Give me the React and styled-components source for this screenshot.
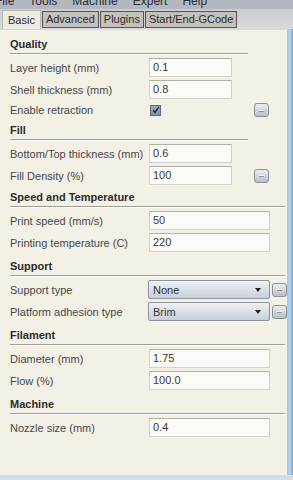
import React from 'react';
import styled, { createGlobalStyle } from 'styled-components';

const GlobalStyle = createGlobalStyle`
	html, body {
		margin: 0;
		padding: 0;
	}
	body {
		width: 293px;
		height: 480px;
		overflow: hidden;
		background: #d4dde6;
		font-family: "Liberation Sans", Arial, sans-serif;
	}
`;

const Frame = styled.div`
	width: 293px;
	height: 480px;
	display: flex;
	flex-direction: column;
	background: #d4dde6;
`;

const MenuBar = styled.div`
	height: 9px;
	overflow: hidden;
	background: #b3b8c0;
	display: flex;
	gap: 15px;
	margin-left: -5px;
	font-size: 12px;
	color: #2a2d33;
	line-height: 12px;
	span {
		display: block;
		margin-top: -5px;
	}
`;

const TabStrip = styled.div`
	height: 20px;
	display: flex;
	align-items: flex-end;
	gap: 1px;
	padding-left: 2px;
	background: linear-gradient(#c9ccd1, #d9dadb);
`;

const Tab = styled.div`
	box-sizing: border-box;
	height: ${({ $active }) => ($active ? '20px' : '17px')};
	margin-bottom: ${({ $active }) => ($active ? '-1px' : '1px')};
	padding: 0 ${({ $active }) => ($active ? '5px' : '3px')};
	font-size: 11px;
	line-height: 15px;
	color: #2c2c2c;
	background: ${({ $active }) => ($active ? '#eeebe3' : '#c3c1bb')};
	border: 1px solid ${({ $active }) => ($active ? '#b9b8b2' : '#55565a')};
	border-bottom: ${({ $active }) => ($active ? 'none' : '1px solid #55565a')};
	padding-top: ${({ $active }) => ($active ? '2px' : '0')};
`;

const Body = styled.div`
	display: flex;
	height: 446px;
`;

const Panel = styled.div`
	flex: 1;
	box-sizing: border-box;
	background: #f3f0e6;
	border-top: 1px solid #dcd9d1;
	border-right: 2px solid #a9cbe4;
	padding: 2px 0 0 10px;
	display: flex;
	flex-direction: column;
`;

const BlueEdge = styled.div`
	width: 5px;
	background: linear-gradient(90deg, #cfe2f0, #6fa6d2);
`;

const Section = styled.div`
	display: flex;
	flex-direction: column;
`;

const Header = styled.div`
	width: ${({ $w }) => $w}px;
	height: ${({ $h }) => $h || 22}px;
	box-sizing: border-box;
	border-bottom: 1px solid #9f9d96;
	box-shadow: 0 1px 0 #ffffff;
	font-size: 11px;
	font-weight: bold;
	color: #2b2b2b;
	line-height: 13px;
	padding-top: ${({ $h }) => ($h || 22) - 16}px;
`;

const Rows = styled.div`
	display: flex;
	flex-direction: column;
	gap: 3px;
	padding-top: 4px;
`;

const Row = styled.div`
	display: grid;
	grid-template-columns: 136px auto auto;
	align-items: center;
	column-gap: ${({ $gap }) => $gap}px;
	height: ${({ $h }) => $h || 19}px;
`;

const Label = styled.div`
	font-size: 11px;
	color: #46464a;
	white-space: nowrap;
`;

const Field = styled.div`
	width: ${({ $w }) => $w}px;
	height: 19px;
	box-sizing: border-box;
	border: 1px solid #d4d2cb;
	border-top-color: #b1afa8;
	background: #fbfaf6;
	font-size: 11px;
	line-height: 17px;
	color: #3a3a3a;
	padding-left: 3px;
`;

const CheckCell = styled.div`
	width: 83px;
`;

const Check = styled.div`
	width: 11px;
	height: 11px;
	margin-left: 1px;
	box-sizing: border-box;
	border: 1px solid #5f6b7d;
	background: linear-gradient(#9eabbe, #7f8ea6);
	display: flex;
	align-items: center;
	justify-content: center;
`;

const DotsButton = styled.div`
	width: 15px;
	height: 14px;
	box-sizing: border-box;
	border: 1px solid #8c9097;
	border-radius: 3px;
	background: linear-gradient(#eceef1, #b9bec6);
	display: flex;
	align-items: center;
	justify-content: center;
	&::after {
		content: '';
		width: 5px;
		height: 1px;
		background: #f6f7f9;
		box-shadow: 0 1px 0 #8e939b;
	}
`;

const Select = styled.div`
	width: 122px;
	height: 19px;
	box-sizing: border-box;
	border: 1px solid #8d939c;
	border-radius: 2px;
	background: linear-gradient(#eef1f5, #c8cfd9);
	display: flex;
	align-items: center;
	justify-content: space-between;
	padding: 0 8px 0 4px;
	font-size: 11px;
	color: #333;
	&::after {
		content: '';
		border-left: 3px solid transparent;
		border-right: 3px solid transparent;
		border-top: 4px solid #222;
	}
`;

const Spacer = styled.div``;

const Checkmark = () => (
	<svg width="8" height="8" viewBox="0 0 8 8">
		<path d="M1.2 4.2 L3 6.4 L6.8 1.2" fill="none" stroke="#1d2330" strokeWidth="1.4" />
	</svg>
);

const FieldRow = ({ label, value, w }) => (
	<Row $gap={3}>
		<Label>{label}</Label>
		<Field $w={w}>{value}</Field>
		<Spacer />
	</Row>
);

const App = () => {
	return (
		<>
			<GlobalStyle />
			<Frame>
				<MenuBar>
					<span>File</span>
					<span>Tools</span>
					<span>Machine</span>
					<span>Expert</span>
					<span>Help</span>
				</MenuBar>
				<TabStrip>
					<Tab $active>Basic</Tab>
					<Tab>Advanced</Tab>
					<Tab>Plugins</Tab>
					<Tab>Start/End-GCode</Tab>
				</TabStrip>
				<Body>
					<Panel>
						<Section>
							<Header $w={238}>Quality</Header>
							<Rows>
								<FieldRow label="Layer height (mm)" value="0.1" w={83} />
								<FieldRow label="Shell thickness (mm)" value="0.8" w={83} />
								<Row $gap={3} $h={16}>
									<Label>Enable retraction</Label>
									<CheckCell>
										<Check>
											<Checkmark />
										</Check>
									</CheckCell>
									<DotsButton />
								</Row>
							</Rows>
						</Section>
						<Section>
							<Header $w={238}>Fill</Header>
							<Rows>
								<FieldRow label="Bottom/Top thickness (mm)" value="0.6" w={83} />
								<Row $gap={3}>
									<Label>Fill Density (%)</Label>
									<Field $w={83}>100</Field>
									<DotsButton />
								</Row>
							</Rows>
						</Section>
						<Section>
							<Header $w={275}>Speed and Temperature</Header>
							<Rows>
								<FieldRow label="Print speed (mm/s)" value="50" w={121} />
								<FieldRow label="Printing temperature (C)" value="220" w={121} />
							</Rows>
						</Section>
						<Section>
							<Header $w={275} $h={24}>Support</Header>
							<Rows>
								<Row $gap={2}>
									<Label>Support type</Label>
									<Select>None</Select>
									<DotsButton />
								</Row>
								<Row $gap={2}>
									<Label>Platform adhesion type</Label>
									<Select>Brim</Select>
									<DotsButton />
								</Row>
							</Rows>
						</Section>
						<Section>
							<Header $w={275} $h={24}>Filament</Header>
							<Rows>
								<FieldRow label="Diameter (mm)" value="1.75" w={121} />
								<FieldRow label="Flow (%)" value="100.0" w={121} />
							</Rows>
						</Section>
						<Section>
							<Header $w={275} $h={24}>Machine</Header>
							<Rows>
								<FieldRow label="Nozzle size (mm)" value="0.4" w={121} />
							</Rows>
						</Section>
					</Panel>
					<BlueEdge />
				</Body>
			</Frame>
		</>
	);
};

export default App;
